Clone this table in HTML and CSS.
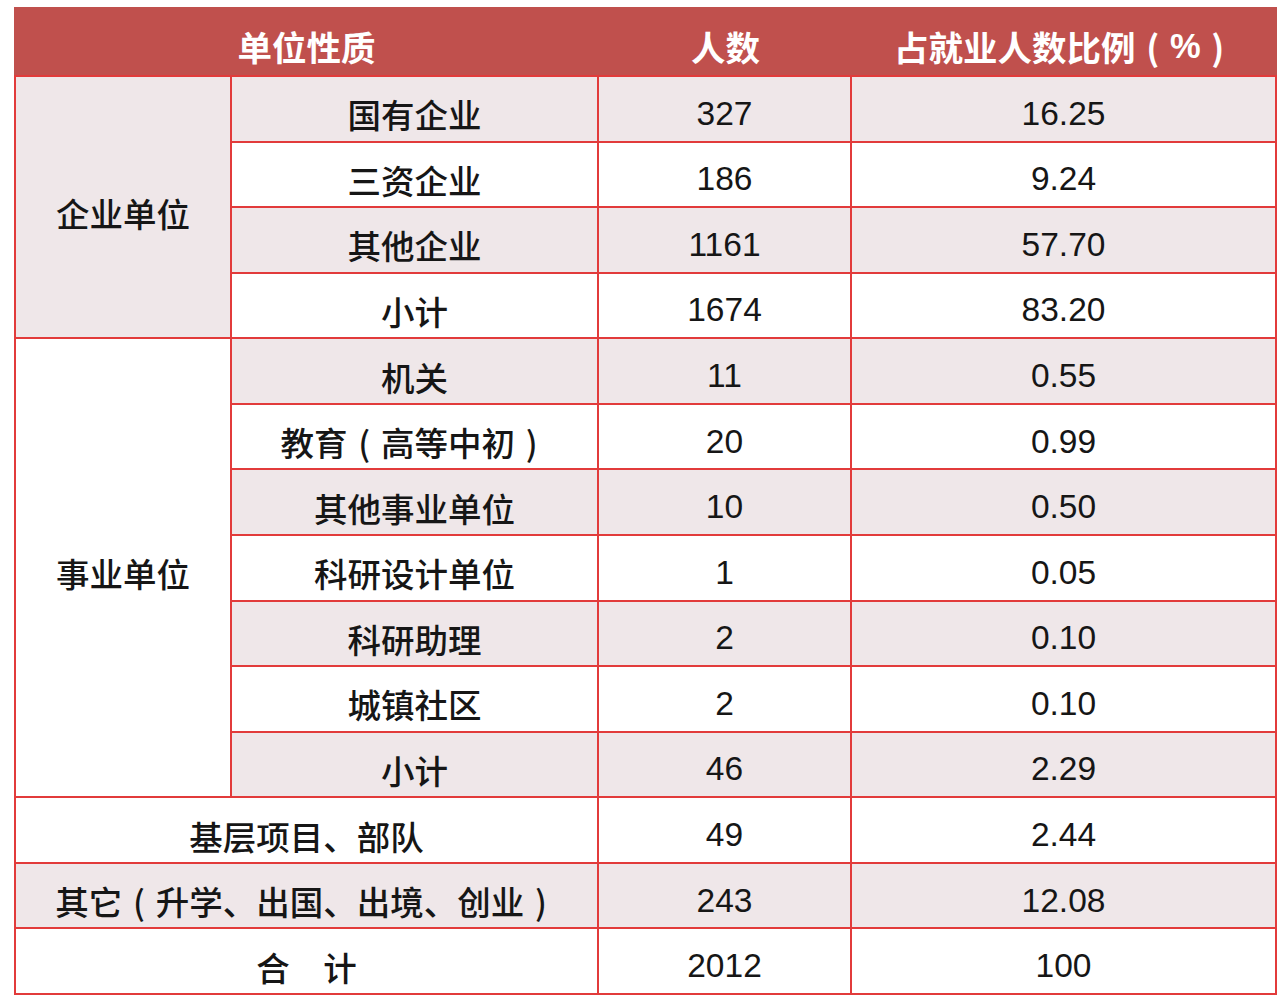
FILE: index.html
```html
<!DOCTYPE html>
<html lang="zh">
<head>
<meta charset="utf-8">
<link rel="stylesheet" href="styles.css">
</head>
<body>
<div class="sheet">
  <div class="head">
    <div class="hc">单位性质</div>
    <div class="hc">人数</div>
    <div class="hc">占就业人数比例<span class="p">(</span>%<span class="p">)</span></div>
  </div>
  <div class="body">
    <div class="c group g1 sh">企业单位</div>
    <div class="c sh">国有企业</div><div class="c sh">327</div><div class="c sh">16.25</div>
    <div class="c">三资企业</div><div class="c">186</div><div class="c">9.24</div>
    <div class="c sh">其他企业</div><div class="c sh">1161</div><div class="c sh">57.70</div>
    <div class="c">小计</div><div class="c">1674</div><div class="c">83.20</div>

    <div class="c group g2">事业单位</div>
    <div class="c sh">机关</div><div class="c sh">11</div><div class="c sh">0.55</div>
    <div class="c">教育<span class="p">(</span>高等中初<span class="p">)</span></div><div class="c">20</div><div class="c">0.99</div>
    <div class="c sh">其他事业单位</div><div class="c sh">10</div><div class="c sh">0.50</div>
    <div class="c">科研设计单位</div><div class="c">1</div><div class="c">0.05</div>
    <div class="c sh">科研助理</div><div class="c sh">2</div><div class="c sh">0.10</div>
    <div class="c">城镇社区</div><div class="c">2</div><div class="c">0.10</div>
    <div class="c sh">小计</div><div class="c sh">46</div><div class="c sh">2.29</div>

    <div class="c wide">基层项目、部队</div><div class="c">49</div><div class="c">2.44</div>
    <div class="c wide sh">其它<span class="p">(</span>升学、出国、出境、创业<span class="p">)</span></div><div class="c sh">243</div><div class="c sh">12.08</div>
    <div class="c wide">合　计</div><div class="c">2012</div><div class="c">100</div>
  </div>
</div>
</body>
</html>
```

FILE: styles.css
```css
html, body {
  margin: 0;
  padding: 0;
  background: #ffffff;
}

.sheet {
  margin: 7px 0 0 14px;
  width: 1263px;
  font-family: "Liberation Sans", "Noto Sans CJK SC", sans-serif;
}

.head {
  height: 68px;
  background: #c0504d;
  display: grid;
  grid-template-columns: 585px 253px 1fr;
}

.hc {
  display: flex;
  align-items: center;
  justify-content: center;
  padding-top: 10px;
  box-sizing: border-box;
  color: #ffffff;
  font-weight: bold;
  font-size: 34.5px;
  white-space: nowrap;
}

.body {
  height: 920px;
  box-sizing: border-box;
  padding: 2px;
  background: #e23b3b;
  display: grid;
  grid-template-columns: 214px 365px 251px 1fr;
  grid-template-rows: repeat(14, 1fr);
  gap: 2px;
}

.c {
  background: #ffffff;
  display: flex;
  align-items: center;
  justify-content: center;
  padding-top: 10px;
  box-sizing: border-box;
  color: #161616;
  font-size: 33.5px;
  font-weight: 500;
  white-space: nowrap;
}

.p {
  display: inline-block;
  width: 1em;
  text-align: center;
  font-family: "Noto Sans CJK SC", sans-serif;
}

.sh {
  background: #efe7e9;
}

.group {
  grid-column: 1;
}

.g1 {
  grid-row: 1 / span 4;
}

.g2 {
  grid-row: 5 / span 7;
}

.wide {
  grid-column: 1 / span 2;
}
```
